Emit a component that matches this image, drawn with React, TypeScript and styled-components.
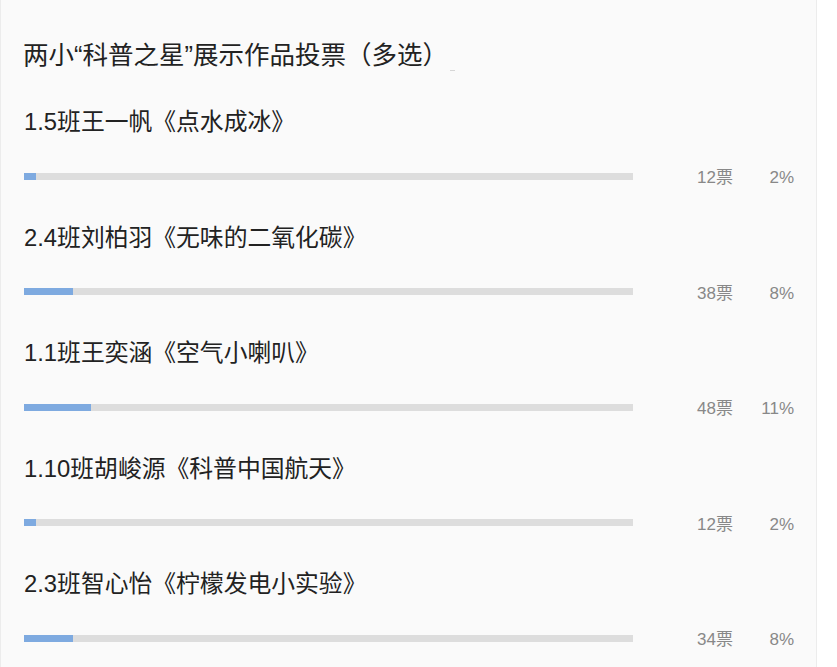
import styled, { createGlobalStyle } from "styled-components"

const GlobalStyle = createGlobalStyle`
  html, body {
    margin: 0;
    padding: 0;
    background: #ffffff;
  }

  body {
    font-family: "Liberation Sans", "Noto Sans CJK SC", sans-serif;
  }
`

const Panel = styled.section`
  box-sizing: border-box;
  width: 817px;
  min-height: 700px;
  padding: 35px 22px 30px;
  background: #fafafa;
  border-left: 1px solid #ececec;
  border-right: 1px solid #ececec;
`

const Title = styled.h2`
  margin: 0 0 27px;
  font-size: 25.5px;
  font-weight: 400;
  line-height: 40px;
  color: #222222;
`

const Dash = styled.span`
  display: inline-block;
  width: 5px;
  height: 1px;
  margin-left: 2px;
  vertical-align: -7px;
  background: #d6d6d6;
`

const List = styled.div`
  display: flex;
  flex-direction: column;
  gap: 31.5px;
`

const Item = styled.div`
  display: flex;
  flex-direction: column;
  gap: 24px;
`

const Label = styled.div`
  padding-left: 1px;
  margin: 2px 0 2px;
  font-size: 23.8px;
  line-height: 36px;
  color: #222222;
`

const BarRow = styled.div`
  display: flex;
  align-items: center;
  height: 20px;
`

const Track = styled.div`
  flex: none;
  width: 609px;
  height: 7px;
  margin-left: 1px;
  background: #dddddd;
`

const Fill = styled.div`
  height: 100%;
  background: #7eaae0;
`

const Stat = styled.span<{ $width: number }>`
  width: ${(p) => p.$width}px;
  margin-top: 3px;
  text-align: right;
  font-size: 17px;
  line-height: 1;
  color: #888888;
`

const entries = [
  { name: "1.5班王一帆《点水成冰》", votes: 12, pct: 2 },
  { name: "2.4班刘柏羽《无味的二氧化碳》", votes: 38, pct: 8 },
  { name: "1.1班王奕涵《空气小喇叭》", votes: 48, pct: 11 },
  { name: "1.10班胡峻源《科普中国航天》", votes: 12, pct: 2 },
  { name: "2.3班智心怡《柠檬发电小实验》", votes: 34, pct: 8 },
]

function App() {
  return (
    <>
      <GlobalStyle />
      <Panel>
        <Title>
          两小“科普之星”展示作品投票（多选）
          <Dash />
        </Title>

        <List>
          {entries.map((entry) => (
            <Item key={entry.name}>
              <Label>{entry.name}</Label>
              <BarRow>
                <Track>
                  <Fill style={{ width: `${entry.pct}%` }} />
                </Track>
                <Stat $width={100}>{entry.votes}票</Stat>
                <Stat $width={61}>{entry.pct}%</Stat>
              </BarRow>
            </Item>
          ))}
        </List>
      </Panel>
    </>
  )
}

export default App
